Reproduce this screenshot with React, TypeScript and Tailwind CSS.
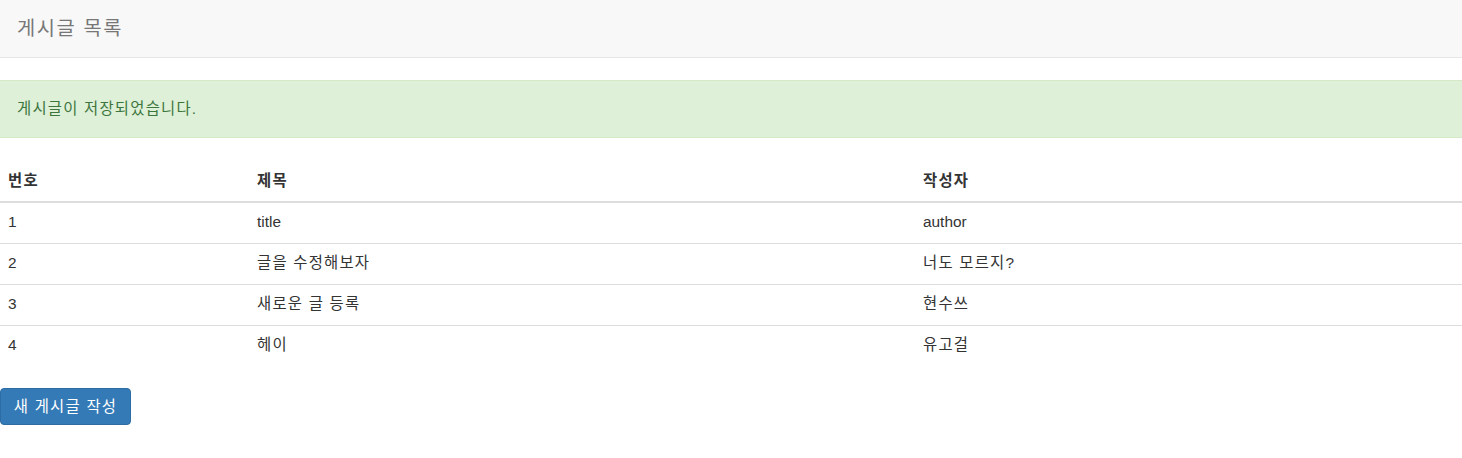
const rows = [
  { id: 1, title: 'title', author: 'author' },
  { id: 2, title: '글을 수정해보자', author: '너도 모르지?' },
  { id: 3, title: '새로운 글 등록', author: '현수쓰' },
  { id: 4, title: '헤이', author: '유고걸' },
]

const font = 'font-["Liberation_Sans","Noto_Sans_CJK_KR",sans-serif]'

// Korean glyphs in the fallback font are a little narrow, widen them a touch
const ko = (s: string) => (/[가-힣]/.test(s) ? 'tracking-[0.08em]' : '')

export default function App() {
  return (
    <div className={`${font} bg-white text-[15.4px] text-[#333] w-[1462px] h-[458px]`}>
      {/* Navbar */}
      <div className="h-[58px] bg-[#f8f8f8] border-b border-[#e7e7e7] flex items-center px-[17px]">
        <span className="text-[19.8px] text-[#777] leading-none tracking-[0.08em]">게시글 목록</span>
      </div>

      {/* Alert */}
      <div className="mt-[22px] h-[58px] bg-[#dff0d8] border-y border-[#d6e9c6] text-[#3c763d] flex items-center px-[17px] tracking-[0.08em]">
        게시글이 저장되었습니다.
      </div>

      {/* Table */}
      <table className="mt-[20px] w-full border-collapse table-fixed">
        <colgroup>
          <col className="w-[249px]" />
          <col className="w-[666px]" />
          <col />
        </colgroup>
        <thead>
          <tr className="h-[44px] border-b-2 border-[#ddd]">
            <th className="text-left font-bold px-[8px] pt-[2px] leading-none tracking-[0.08em]">번호</th>
            <th className="text-left font-bold px-[8px] pt-[2px] leading-none tracking-[0.08em]">제목</th>
            <th className="text-left font-bold px-[8px] pt-[2px] leading-none tracking-[0.08em]">작성자</th>
          </tr>
        </thead>
        <tbody>
          {rows.map((r, i) => (
            <tr key={r.id} className={`h-[41px] ${i > 0 ? 'border-t border-[#ddd]' : ''}`}>
              <td className="px-[8px] leading-none pb-[2px]">{r.id}</td>
              <td className={`px-[8px] leading-none pb-[2px] ${ko(r.title)}`}>{r.title}</td>
              <td className={`px-[8px] leading-none pb-[2px] ${ko(r.author)}`}>{r.author}</td>
            </tr>
          ))}
        </tbody>
      </table>

      {/* Button */}
      <div className="mt-[22px]">
        <button className="h-[37px] w-[131px] bg-[#337ab7] border border-[#2e6da4] rounded-[4px] text-white leading-none tracking-[0.08em]">
          새 게시글 작성
        </button>
      </div>
    </div>
  )
}
